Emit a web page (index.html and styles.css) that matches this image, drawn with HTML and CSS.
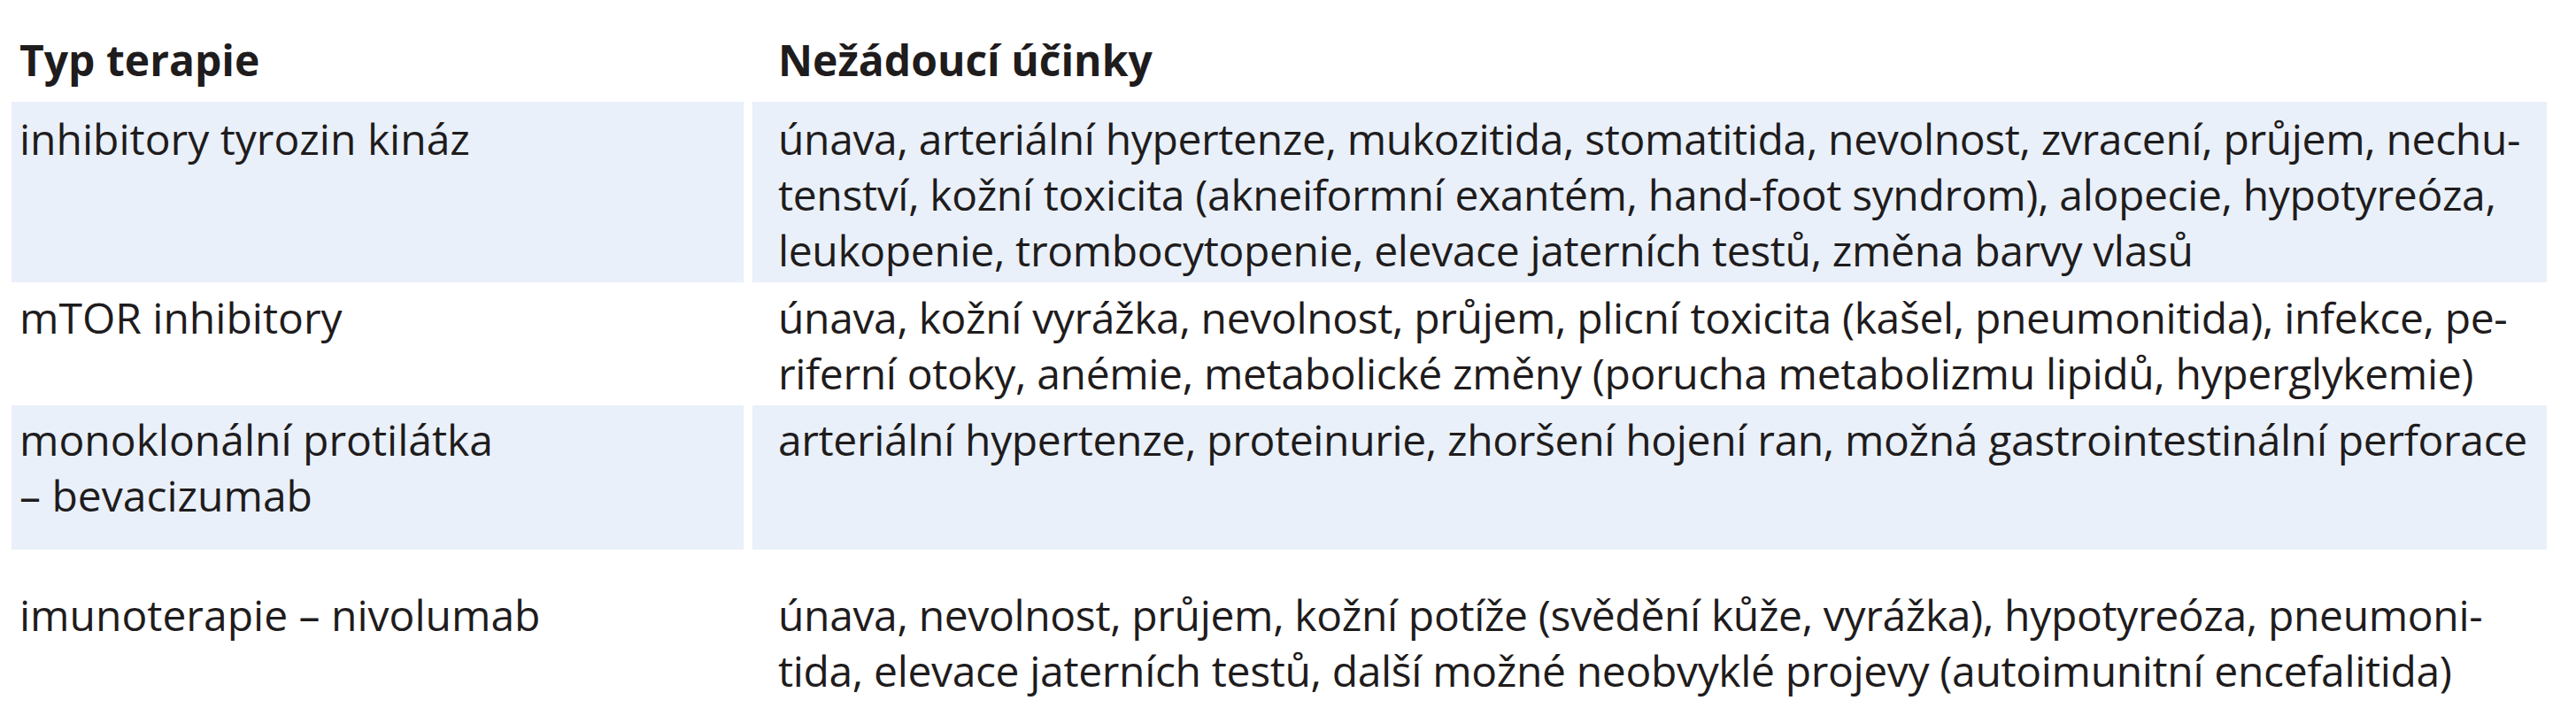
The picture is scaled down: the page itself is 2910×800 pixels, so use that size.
FILE: index.html
```html
<!DOCTYPE html>
<html lang="cs">
<head>
<meta charset="utf-8">
<title>Nežádoucí účinky</title>
<link rel="stylesheet" href="styles.css">
</head>
<body>
<div class="table">
  <div class="cell head">Typ terapie</div>
  <div class="cell head right">Nežádoucí účinky</div>

  <div class="cell shade r1">inhibitory tyrozin kináz</div>
  <div class="cell shade right r1">únava, arteriální hypertenze, mukozitida, stomatitida, nevolnost, zvracení, průjem, nechu-<br>tenství, kožní toxicita (akneiformní exantém, hand-foot syndrom), alopecie, hypotyreóza,<br>leukopenie, trombocytopenie, elevace jaterních testů, změna barvy vlasů</div>

  <div class="cell r2">mTOR inhibitory</div>
  <div class="cell right r2">únava, kožní vyrážka, nevolnost, průjem, plicní toxicita (kašel, pneumonitida), infekce, pe-<br>riferní otoky, anémie, metabolické změny (porucha metabolizmu lipidů, hyperglykemie)</div>

  <div class="cell shade r3">monoklonální protilátka<br>– bevacizumab</div>
  <div class="cell shade right r3">arteriální hypertenze, proteinurie, zhoršení hojení ran, možná gastrointestinální perforace</div>

  <div class="cell r4">imunoterapie – nivolumab</div>
  <div class="cell right r4">únava, nevolnost, průjem, kožní potíže (svědění kůže, vyrážka), hypotyreóza, pneumoni-<br>tida, elevace jaterních testů, další možné neobvyklé projevy (autoimunitní encefalitida)</div>
</div>
</body>
</html>
```

FILE: styles.css
```css
html, body {
  margin: 0;
  padding: 0;
  background: #ffffff;
}

body {
  font-family: "Open Sans", "Noto Sans", sans-serif;
  font-size: 48px;
  line-height: 63px;
  color: #1f1c1d;
}

.table {
  display: grid;
  grid-template-columns: 827px 2027px;
  column-gap: 10px;
  padding: 0 0 0 13px;
  width: max-content;
}

.cell {
  white-space: nowrap;
  padding: 0 0 0 9px;
}

.cell.right {
  padding-left: 29px;
  letter-spacing: -0.35px;
}

.head {
  font-weight: 700;
  padding-top: 36px;
  padding-bottom: 16px;
}

.head.right {
  letter-spacing: 0;
}

.shade {
  background: #e9f0f9;
}

.r1 {
  padding-top: 10px;
  padding-bottom: 5px;
}

.r2 {
  padding-top: 8px;
  padding-bottom: 5px;
}

.r3 {
  padding-top: 7px;
  padding-bottom: 30px;
}

.r4 {
  padding-top: 42px;
  padding-bottom: 5px;
}
```
